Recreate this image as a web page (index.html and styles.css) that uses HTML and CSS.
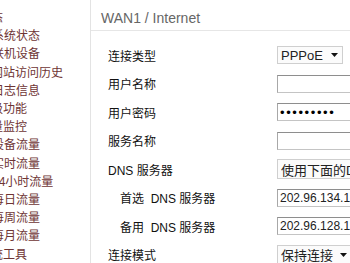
FILE: index.html
```html
<!DOCTYPE html>
<html lang="zh-CN">
<head>
<meta charset="utf-8">
<title>WAN1 / Internet</title>
<link rel="stylesheet" href="styles.css">
</head>
<body>
<div class="page">
  <nav class="sidebar">
    <ul class="menu">
      <li class="top">运行状态</li>
      <li>系统状态</li>
      <li>联机设备</li>
      <li class="wide">网站访问历史</li>
      <li>日志信息</li>
      <li class="head">高级功能</li>
      <li class="head">流量监控</li>
      <li>设备流量</li>
      <li>实时流量</li>
      <li>24小时流量</li>
      <li>每日流量</li>
      <li>每周流量</li>
      <li>每月流量</li>
      <li class="head">系统工具</li>
    </ul>
  </nav>
  <main class="main">
    <h1 class="title">WAN1 / Internet</h1>
    <div class="form">
      <div class="row">
        <span class="label">连接类型</span>
        <div class="select short"><span>PPPoE</span><svg class="arrow" width="7" height="4" viewBox="0 0 7 4"><path d="M0 0H7L3.5 4Z" fill="#111"/></svg></div>
      </div>
      <div class="row">
        <span class="label">用户名称</span>
        <input class="field" type="text" value="">
      </div>
      <div class="row">
        <span class="label">用户密码</span>
        <input class="field pass" type="password" value="123456789">
      </div>
      <div class="row">
        <span class="label">服务名称</span>
        <input class="field" type="text" value="">
      </div>
      <div class="row">
        <span class="label">DNS 服务器</span>
        <div class="select long"><span>使用下面的DNS服务器地址</span></div>
      </div>
      <div class="row">
        <span class="label sub">首选&nbsp; DNS 服务器</span>
        <input class="field" type="text" value="202.96.134.133">
      </div>
      <div class="row">
        <span class="label sub">备用&nbsp; DNS 服务器</span>
        <input class="field" type="text" value="202.96.128.166">
      </div>
      <div class="row">
        <span class="label">连接模式</span>
        <div class="select mid"><span>保持连接</span><svg class="arrow" width="7" height="4" viewBox="0 0 7 4"><path d="M0 0H7L3.5 4Z" fill="#111"/></svg></div>
      </div>
    </div>
  </main>
</div>
</body>
</html>
```
FILE: styles.css
```css
* { box-sizing: border-box; }
html, body {
  margin: 0;
  padding: 0;
  background: #fff;
}
body {
  width: 350px;
  height: 263px;
  overflow: hidden;
  font-family: "Liberation Sans", Arial, "Noto Sans CJK SC", sans-serif;
}
.page {
  display: flex;
  height: 263px;
}
.sidebar {
  width: 91px;
  flex: none;
  border-right: 1px solid #e3e3e3;
  overflow: hidden;
}
.menu {
  list-style: none;
  margin: 0;
  padding: 9px 0 0 0;
  font-size: 12px;
  line-height: 18.2px;
  color: #6e3434;
  white-space: nowrap;
}
.menu li {
  margin-left: -8px;
}
.menu li.wide {
  margin-left: -9px;
}
.menu li.head {
  margin-left: -21px;
}
.menu li.top {
  margin-left: -45px;
}
.main {
  flex: 1;
  min-width: 0;
  overflow: hidden;
}
.title {
  margin: 0;
  padding: 6px 0 0 10px;
  height: 31px;
  line-height: 24px;
  font-size: 14px;
  font-weight: normal;
  color: #666;
  border-bottom: 1px solid #e6e6e6;
  white-space: nowrap;
}
.form {
  padding: 15px 0 0 17px;
  display: grid;
  grid-template-columns: 169px 100px;
  grid-auto-rows: 28.5px;
}
.row {
  display: contents;
}
.label {
  font-size: 12px;
  color: #111;
  white-space: nowrap;
  align-self: start;
  line-height: 18px;
  padding-top: 1.5px;
}
.label.sub {
  padding-left: 12px;
}
.field, .select {
  height: 18px;
  border: 1px solid #c4c4c4;
  border-top-color: #8e8e8e;
  border-left-color: #a8a8a8;
  font-family: "Liberation Sans", Arial, "Noto Sans CJK SC", sans-serif;
  font-size: 12px;
  color: #222;
  padding: 0 0 0 2px;
  margin: 0;
  width: 100px;
  background: #fff;
  outline: none;
  align-self: start;
}
.pass {
  letter-spacing: 1.6px;
  font-size: 13px;
  color: #000;
}
.select {
  display: flex;
  align-items: center;
  border: 1px solid #cfcfcf;
  background: #fbfbfb;
  padding-left: 3px;
  white-space: nowrap;
  overflow: hidden;
  font-size: 13px;
}
.select span {
  flex: none;
}
.select.short {
  width: 66px;
}
.select.short span { width: 50px; }
.select.mid span { width: 59px; }
.select.long, .select.mid {
  height: 20px;
  margin-top: -1px;
}
.arrow {
  flex: none;
  display: block;
}
```
